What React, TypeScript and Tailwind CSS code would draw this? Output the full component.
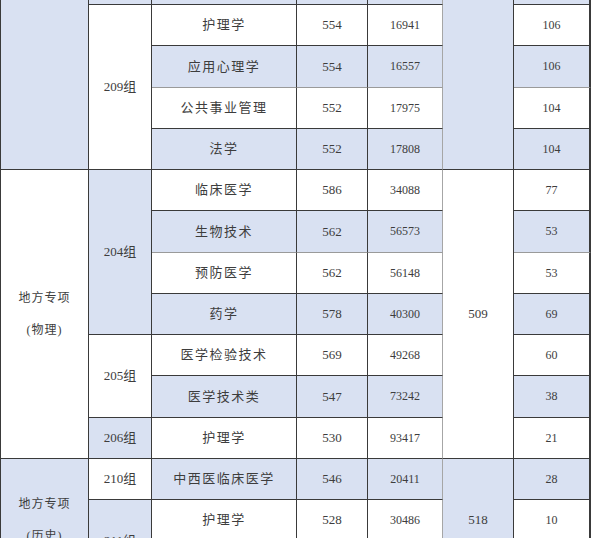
type Row = {
  group?: { label: string; span: number; blue: boolean }
  region?: { lines: string[]; span: number; blue: boolean }
  plan?: { value: string; span: number; blue: boolean }
  major: string
  score: string
  rank: string
  count: string
  gray?: boolean
}

const rows: Row[] = [
  { major: '护理学', score: '554', rank: '16941', count: '106', group: { label: '209组', span: 4, blue: false } },
  { major: '应用心理学', score: '554', rank: '16557', count: '106', gray: true },
  { major: '公共事业管理', score: '552', rank: '17975', count: '104' },
  { major: '法学', score: '552', rank: '17808', count: '104' },
  {
    major: '临床医学',
    score: '586',
    rank: '34088',
    count: '77',
    region: { lines: ['地方专项', '(物理)'], span: 7, blue: false },
    group: { label: '204组', span: 4, blue: true },
    plan: { value: '509', span: 7, blue: false },
  },
  { major: '生物技术', score: '562', rank: '56573', count: '53', gray: true },
  { major: '预防医学', score: '562', rank: '56148', count: '53' },
  { major: '药学', score: '578', rank: '40300', count: '69' },
  { major: '医学检验技术', score: '569', rank: '49268', count: '60', group: { label: '205组', span: 2, blue: false } },
  { major: '医学技术类', score: '547', rank: '73242', count: '38' },
  { major: '护理学', score: '530', rank: '93417', count: '21', group: { label: '206组', span: 1, blue: true } },
  {
    major: '中西医临床医学',
    score: '546',
    rank: '20411',
    count: '28',
    region: { lines: ['地方专项', '(历史)'], span: 3, blue: true },
    group: { label: '210组', span: 1, blue: false },
    plan: { value: '518', span: 3, blue: true },
  },
  { major: '护理学', score: '528', rank: '30486', count: '10', group: { label: '211组', span: 2, blue: true } },
  { major: '', score: '', rank: '', count: '' },
]

const dark = 'border-[#3a3a3a]'
const blueBg = 'bg-[#d9e1f2]'

export default function App() {
  return (
    <div className="h-[538px] overflow-hidden bg-white text-[#3d3d3d] [font-family:'Liberation_Serif','Noto_Sans_CJK_SC',serif]">
      <table className={`table-fixed w-[590px] border-separate border-spacing-0 border-l ${dark}`}>
        <colgroup>
          <col className="w-[88px]" />
          <col className="w-[63px]" />
          <col className="w-[145px]" />
          <col className="w-[71px]" />
          <col className="w-[75px]" />
          <col className="w-[71px]" />
          <col className="w-[77px]" />
        </colgroup>
        <tbody>
          {/* tail of the row above */}
          <tr className="h-[5px]">
            <td rowSpan={5} className={`${blueBg} border-r border-b ${dark}`} />
            <td className={`${blueBg} border-r border-b ${dark}`} />
            <td className={`${blueBg} border-r border-b ${dark}`} />
            <td className={`${blueBg} border-r border-b ${dark}`} />
            <td className={`${blueBg} border-r border-b border-r-[#a6a6a6] border-b-[#3a3a3a]`} />
            <td rowSpan={5} className={`${blueBg} border-r border-b ${dark}`} />
            <td className={`${blueBg} border-r-2 border-b ${dark}`} />
          </tr>
          {rows.map((r, i) => {
            const bg = i % 2 === 1 ? blueBg : 'bg-white'
            const bottom = r.gray ? 'border-b-[#9a9a9a]' : 'border-b-[#3a3a3a]'
            const cell = `${bg} border-r border-b border-r-[#3a3a3a] ${bottom} text-center align-middle p-0`
            return (
              <tr key={i} className="h-[41.25px]">
                {r.region && (
                  <td
                    rowSpan={r.region.span}
                    className={`${r.region.blue ? blueBg : 'bg-white'} border-r border-b ${dark} text-center text-[12px] tracking-[1px] leading-[32px]`}
                  >
                    {r.region.lines.map((l) => (
                      <div key={l}>{l}</div>
                    ))}
                  </td>
                )}
                {r.group && (
                  <td
                    rowSpan={r.group.span}
                    className={`${r.group.blue ? blueBg : 'bg-white'} border-r border-b ${dark} text-center text-[13px]`}
                  >
                    {r.group.label}
                  </td>
                )}
                <td className={`${cell} text-[13px] tracking-[1.5px]`}>{r.major}</td>
                <td className={`${cell} text-[13px]`}>{r.score}</td>
                <td className={`${cell} text-[12px] border-r-[#a6a6a6]`}>{r.rank}</td>
                {r.plan && (
                  <td
                    rowSpan={r.plan.span}
                    className={`${r.plan.blue ? blueBg : 'bg-white'} border-r border-b ${dark} text-center text-[13px]`}
                  >
                    {r.plan.value}
                  </td>
                )}
                <td className={`${bg} border-r-2 border-b border-r-[#3a3a3a] ${bottom} text-center text-[12px]`}>
                  {r.count}
                </td>
              </tr>
            )
          })}
        </tbody>
      </table>
    </div>
  )
}
